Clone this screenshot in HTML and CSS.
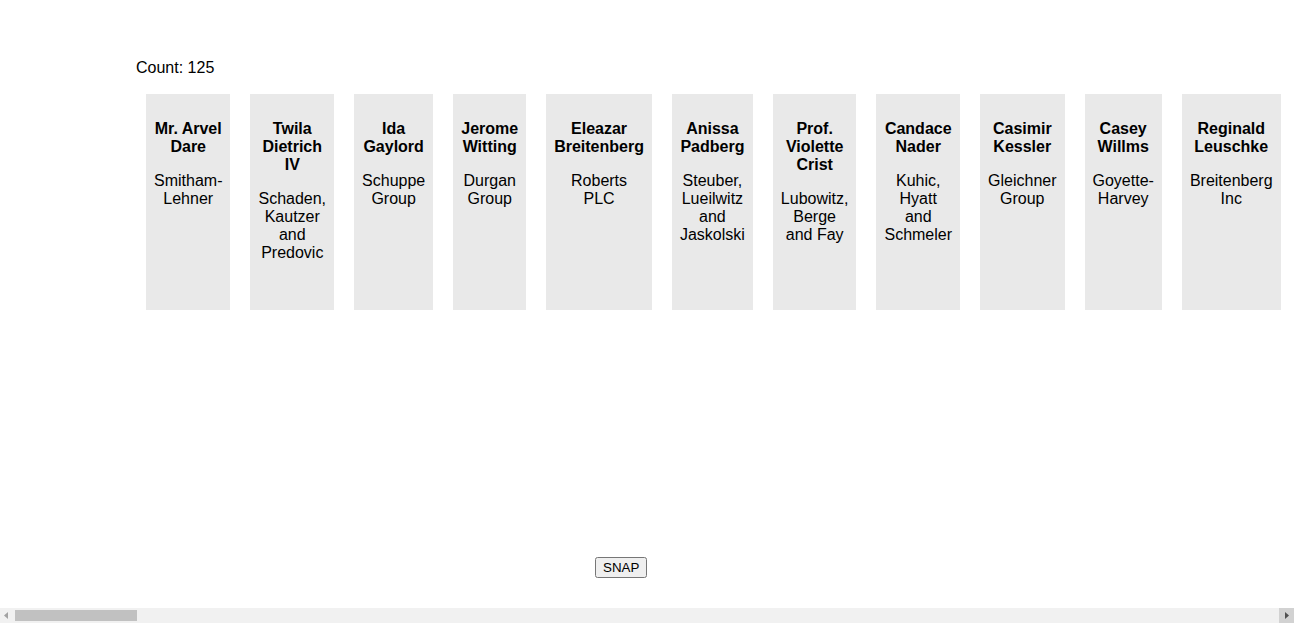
FILE: index.html
```html
<!DOCTYPE html>
<html lang="en">
<head>
<meta charset="utf-8">
<title>Cards</title>
<link rel="stylesheet" href="styles.css">
</head>
<body>
<div class="scroller">
<div class="app">
  <div class="count">Count: 125</div>
  <div class="row">
    <div class="card"><p class="name">Mr. Arvel Dare</p><p class="co">Smitham-Lehner</p></div>
    <div class="card"><p class="name">Twila Dietrich IV</p><p class="co">Schaden, Kautzer and Predovic</p></div>
    <div class="card"><p class="name">Ida Gaylord</p><p class="co">Schuppe Group</p></div>
    <div class="card"><p class="name">Jerome Witting</p><p class="co">Durgan Group</p></div>
    <div class="card"><p class="name">Eleazar Breitenberg</p><p class="co">Roberts PLC</p></div>
    <div class="card"><p class="name">Anissa Padberg</p><p class="co">Steuber, Lueilwitz and Jaskolski</p></div>
    <div class="card"><p class="name">Prof. Violette Crist</p><p class="co">Lubowitz, Berge and Fay</p></div>
    <div class="card"><p class="name">Candace Nader</p><p class="co">Kuhic, Hyatt and Schmeler</p></div>
    <div class="card"><p class="name">Casimir Kessler</p><p class="co">Gleichner Group</p></div>
    <div class="card"><p class="name">Casey Willms</p><p class="co">Goyette-Harvey</p></div>
    <div class="card"><p class="name">Reginald Leuschke</p><p class="co">Breitenberg Inc</p></div>
    <div class="card"><p class="name">Maximillian Rohan</p><p class="co">Hermiston Ltd</p></div>
    <div class="card"><p class="name">Dr. Lorna Kuvalis</p><p class="co">Bauch-Hills</p></div>
    <div class="card"><p class="name">Keshawn Mante</p><p class="co">Wiza, Kub and Gutmann</p></div>
    <div class="card"><p class="name">Mrs. Estell Hoppe</p><p class="co">Kemmer LLC</p></div>
    <div class="card"><p class="name">Golda Bins</p><p class="co">Rutherford Inc</p></div>
    <div class="card"><p class="name">Waino Pfeffer Jr.</p><p class="co">Morissette-Rath</p></div>
    <div class="card"><p class="name">Zelda Kunze</p><p class="co">Ledner Group</p></div>
    <div class="card"><p class="name">Brannon Hagenes</p><p class="co">Heathcote, Walsh and Jast</p></div>
    <div class="card"><p class="name">Ms. Phyllis Torp</p><p class="co">Koepp PLC</p></div>
    <div class="card"><p class="name">Ulices Wolff</p><p class="co">Kautzer-Quitzon</p></div>
    <div class="card"><p class="name">Leola Bernhard</p><p class="co">Nikolaus Ltd</p></div>
    <div class="card"><p class="name">Destin Marquardt II</p><p class="co">Cremin, Rau and Ritchie</p></div>
    <div class="card"><p class="name">Yessenia Hane</p><p class="co">Larkin Inc</p></div>
    <div class="card"><p class="name">Prof. Orval Grady</p><p class="co">Moen-Treutel</p></div>
    <div class="card"><p class="name">Jaida Schinner</p><p class="co">Sipes LLC</p></div>
    <div class="card"><p class="name">Demarco Effertz</p><p class="co">Dach Group</p></div>
    <div class="card"><p class="name">Mittie Bogan</p><p class="co">Wehner, Runolfsson and Kerluke</p></div>
    <div class="card"><p class="name">Alfonzo Leffler</p><p class="co">Toy-Ernser</p></div>
    <div class="card"><p class="name">Mr. Kennith Herzog</p><p class="co">Abshire PLC</p></div>
    <div class="card"><p class="name">Ozella Wunsch</p><p class="co">Fadel Inc</p></div>
    <div class="card"><p class="name">Santino Considine</p><p class="co">Mayert-Zulauf</p></div>
    <div class="card"><p class="name">Ardella Bednar DVM</p><p class="co">Murazik Ltd</p></div>
    <div class="card"><p class="name">Hollis Ondricka</p><p class="co">Feil, Bode and Mertz</p></div>
    <div class="card"><p class="name">Katheryn Zboncak</p><p class="co">Goldner Group</p></div>
    <div class="card"><p class="name">Emmitt Reichert</p><p class="co">Huel LLC</p></div>
    <div class="card"><p class="name">Dr. Marlee Shanahan</p><p class="co">Schowalter-Ratke</p></div>
    <div class="card"><p class="name">Rodrick Cummerata</p><p class="co">Hessel Inc</p></div>
    <div class="card"><p class="name">Liliane Stiedemann</p><p class="co">Bartoletti, Stroman and Wolf</p></div>
    <div class="card"><p class="name">Tremaine Lesch</p><p class="co">Orn PLC</p></div>
    <div class="card"><p class="name">Mrs. Brisa Gislason</p><p class="co">Kshlerin-Hahn</p></div>
    <div class="card"><p class="name">Wilford O'Keefe</p><p class="co">Grimes Group</p></div>
    <div class="card"><p class="name">Nyah Volkman</p><p class="co">Tromp LLC</p></div>
    <div class="card"><p class="name">Kody Prosacco</p><p class="co">Boyer, Hintz and Douglas</p></div>
    <div class="card"><p class="name">Elza Mraz Sr.</p><p class="co">Kirlin Ltd</p></div>
    <div class="card"><p class="name">Prof. Dangelo Beier</p><p class="co">Stamm-Bergnaum</p></div>
    <div class="card"><p class="name">Fern Howell</p><p class="co">Jerde Inc</p></div>
    <div class="card"><p class="name">Gunner Bartell</p><p class="co">Weissnat, Langworth and Conn</p></div>
    <div class="card"><p class="name">Aurelia Langosh</p><p class="co">Rempel Group</p></div>
    <div class="card"><p class="name">Jaylon Friesen</p><p class="co">Harris-Sporer</p></div>
    <div class="card"><p class="name">Ms. Delphia Homenick</p><p class="co">Pouros PLC</p></div>
    <div class="card"><p class="name">Osborne Greenfelder</p><p class="co">Medhurst LLC</p></div>
    <div class="card"><p class="name">Chaya Wyman</p><p class="co">Hodkiewicz, Price and Block</p></div>
    <div class="card"><p class="name">Lonzo Schamberger</p><p class="co">Hilpert Inc</p></div>
    <div class="card"><p class="name">Berniece Ullrich MD</p><p class="co">Franecki-Jacobs</p></div>
    <div class="card"><p class="name">Tyrique Hammes</p><p class="co">Emard Group</p></div>
    <div class="card"><p class="name">Mr. Ignatius Rempel</p><p class="co">Gorczany Ltd</p></div>
    <div class="card"><p class="name">Rosalyn Aufderhar</p><p class="co">Reinger, Blick and Ziemann</p></div>
    <div class="card"><p class="name">Hubert Runte</p><p class="co">Raynor LLC</p></div>
    <div class="card"><p class="name">Makenna Dibbert</p><p class="co">Oberbrunner-Pagac</p></div>
    <div class="card"><p class="name">Dr. Cristian Lind</p><p class="co">Jacobi PLC</p></div>
    <div class="card"><p class="name">Aleen Hyatt</p><p class="co">Zemlak Inc</p></div>
    <div class="card"><p class="name">Darrion Walter</p><p class="co">Ankunding, Ward and Lynch</p></div>
    <div class="card"><p class="name">Itzel Wilkinson</p><p class="co">Cassin Group</p></div>
    <div class="card"><p class="name">Prof. Emory Schulist</p><p class="co">Glover-Daugherty</p></div>
    <div class="card"><p class="name">Janae Hackett</p><p class="co">Lemke LLC</p></div>
    <div class="card"><p class="name">Cleo Romaguera III</p><p class="co">Kassulke Ltd</p></div>
    <div class="card"><p class="name">Leonel Tillman</p><p class="co">Kuphal, Spinka and Osinski</p></div>
    <div class="card"><p class="name">Verla Mosciski</p><p class="co">Bergstrom Inc</p></div>
    <div class="card"><p class="name">Brycen Predovic</p><p class="co">Dooley-Mills</p></div>
    <div class="card"><p class="name">Mrs. Tressa Gerlach</p><p class="co">Gutkowski PLC</p></div>
    <div class="card"><p class="name">Alec Lakin</p><p class="co">Mueller Group</p></div>
    <div class="card"><p class="name">Sigrid Dickens</p><p class="co">Purdy, Hansen and Lowe</p></div>
    <div class="card"><p class="name">Rolando Keebler</p><p class="co">Wintheiser LLC</p></div>
    <div class="card"><p class="name">Annabell Crooks</p><p class="co">Kohler-Veum</p></div>
    <div class="card"><p class="name">Mr. Korey Harvey</p><p class="co">Schroeder Inc</p></div>
    <div class="card"><p class="name">Nona Carroll</p><p class="co">Okuneva Ltd</p></div>
    <div class="card"><p class="name">Everardo Zieme</p><p class="co">Turcotte, Vandervort and Upton</p></div>
    <div class="card"><p class="name">Dr. Ettie Luettgen</p><p class="co">Reilly Group</p></div>
    <div class="card"><p class="name">Cordell Sawayn</p><p class="co">Crona-Becker</p></div>
    <div class="card"><p class="name">Albertha Quigley</p><p class="co">Witting LLC</p></div>
    <div class="card"><p class="name">Jasen Bayer PhD</p><p class="co">Fritsch PLC</p></div>
    <div class="card"><p class="name">Magdalen Streich</p><p class="co">Lang, Rosenbaum and Hand</p></div>
    <div class="card"><p class="name">Trevion Johns</p><p class="co">Lebsack Inc</p></div>
    <div class="card"><p class="name">Ms. Dolly Kiehn</p><p class="co">Hagenes-Bruen</p></div>
    <div class="card"><p class="name">Niko Powlowski</p><p class="co">Collier Group</p></div>
    <div class="card"><p class="name">Queenie Senger</p><p class="co">Smith Ltd</p></div>
    <div class="card"><p class="name">Anderson Goodwin</p><p class="co">Vandervort, Bradtke and Rice</p></div>
    <div class="card"><p class="name">Prof. Lucie Kozey</p><p class="co">Daniel LLC</p></div>
    <div class="card"><p class="name">Garth Beatty</p><p class="co">Altenwerth-Schmitt</p></div>
    <div class="card"><p class="name">Marjory Monahan</p><p class="co">Champlin Inc</p></div>
    <div class="card"><p class="name">Elian Rosenbaum</p><p class="co">McGlynn PLC</p></div>
    <div class="card"><p class="name">Thalia Wisozk V</p><p class="co">Little, Ferry and Towne</p></div>
    <div class="card"><p class="name">Dewitt Metz</p><p class="co">Sauer Group</p></div>
    <div class="card"><p class="name">Mrs. Felicita Lueilwitz</p><p class="co">Cronin-Green</p></div>
    <div class="card"><p class="name">Kareem Gibson</p><p class="co">Borer LLC</p></div>
    <div class="card"><p class="name">Yolanda Casper</p><p class="co">Hamill Ltd</p></div>
    <div class="card"><p class="name">Mr. Dayton Spencer</p><p class="co">Schumm, Waelchi and Terry</p></div>
    <div class="card"><p class="name">Ebba Kulas</p><p class="co">Macejkovic Inc</p></div>
    <div class="card"><p class="name">Lamont Beahan</p><p class="co">Runolfsdottir-Kris</p></div>
    <div class="card"><p class="name">Carolanne Barton</p><p class="co">Pfannerstill Group</p></div>
    <div class="card"><p class="name">Dr. Jovany Ryan</p><p class="co">Quigley PLC</p></div>
    <div class="card"><p class="name">Hermina Fahey</p><p class="co">Bashirian, Parisian and Koss</p></div>
    <div class="card"><p class="name">Kaleb Schoen</p><p class="co">Ullrich LLC</p></div>
    <div class="card"><p class="name">Oma Denesik</p><p class="co">Russel-Yost</p></div>
    <div class="card"><p class="name">Prof. Reuben Kreiger</p><p class="co">Hoeger Inc</p></div>
    <div class="card"><p class="name">Tania Stracke</p><p class="co">Schultz Ltd</p></div>
    <div class="card"><p class="name">Wallace Jakubowski</p><p class="co">Marvin, Kreiger and Nolan</p></div>
    <div class="card"><p class="name">Shanie Fisher DDS</p><p class="co">Corwin Group</p></div>
    <div class="card"><p class="name">Adolph Upton</p><p class="co">Christiansen-Wyman</p></div>
    <div class="card"><p class="name">Mrs. Idell Lowe</p><p class="co">Kilback LLC</p></div>
    <div class="card"><p class="name">Bernardo Herman</p><p class="co">Frami PLC</p></div>
    <div class="card"><p class="name">Krystal Moore</p><p class="co">Mohr, Brakus and Hudson</p></div>
    <div class="card"><p class="name">Sterling Batz</p><p class="co">Hickle Inc</p></div>
    <div class="card"><p class="name">Ms. Mayra Graham</p><p class="co">Torphy-Schiller</p></div>
    <div class="card"><p class="name">Johnathon Olson</p><p class="co">Veum Group</p></div>
    <div class="card"><p class="name">Providenci Bauch</p><p class="co">Swift Ltd</p></div>
    <div class="card"><p class="name">Mr. Raphael Jenkins</p><p class="co">Legros, Sanford and Bogisich</p></div>
    <div class="card"><p class="name">Genevieve Hudson</p><p class="co">Keeling LLC</p></div>
    <div class="card"><p class="name">Deondre Farrell</p><p class="co">Zieme-Fahey</p></div>
    <div class="card"><p class="name">Dr. Alverta Nolan</p><p class="co">Kovacek PLC</p></div>
    <div class="card"><p class="name">Rasheed Koelpin</p><p class="co">Beer Inc</p></div>
    <div class="card"><p class="name">Clotilde Schmidt</p><p class="co">Prohaska, Dickinson and Yundt</p></div>
    <div class="card"><p class="name">Hank Reynolds</p><p class="co">Wolff Group</p></div>
    <div class="card"><p class="name">Eulah Fay Jr.</p><p class="co">Gusikowski-Becker</p></div>
  </div>
</div>
<div class="footer">
  <button class="snap" type="button">SNAP</button>
</div>
</div>
<div class="hbar" aria-hidden="true">
  <span class="hbtn hbtn-start"><svg width="15" height="15" viewBox="0 0 15 15"><path d="M4 7.5 L8 4 L8 11 Z" fill="#a3a3a3"/></svg></span>
  <span class="htrack"><span class="hthumb"></span></span>
  <span class="hbtn hbtn-end"><svg width="15" height="15" viewBox="0 0 15 15"><path d="M10 7.5 L6 4 L6 11 Z" fill="#505050"/></svg></span>
</div>
</body>
</html>
```

FILE: styles.css
```css
html, body {
  background: #ffffff;
}

body {
  margin: 0;
  font-family: "Liberation Sans", Arial, sans-serif;
  font-size: 16px;
  color: #000000;
  overflow: hidden;
}

.scroller {
  width: 100vw;
  height: calc(100vh - 15px);
  overflow-x: auto;
  overflow-y: hidden;
  scrollbar-width: none;
}

.app {
  padding: 59px 0 0 136px;
}

.count {
  line-height: normal;
  margin: 0 0 17px 0;
}

.row {
  display: flex;
  flex-wrap: nowrap;
  gap: 20px;
  padding: 0 10px;
  width: max-content;
}

.card {
  flex: none;
  width: min-content;
  height: 198px;
  padding: 10px 8px 8px;
  background: #e9e9e9;
  text-align: center;
}

.card p {
  margin: 16px 0;
}

.name {
  font-weight: bold;
}

.footer {
  margin-top: 247px;
  padding-left: 595px;
}

.snap {
  font-family: "Liberation Sans", Arial, sans-serif;
  font-size: 13.333px;
}

.hbar {
  display: flex;
  height: 15px;
  background: #f1f1f1;
}

.hbtn {
  flex: none;
  display: block;
  width: 15px;
  height: 15px;
}

.hbtn svg {
  display: block;
}

.hbtn-end {
  background: #d2d2d2;
}

.htrack {
  flex: 1;
  display: block;
  padding: 2px 0;
}

.hthumb {
  display: block;
  width: 122px;
  height: 11px;
  background: #c1c1c1;
}
```
